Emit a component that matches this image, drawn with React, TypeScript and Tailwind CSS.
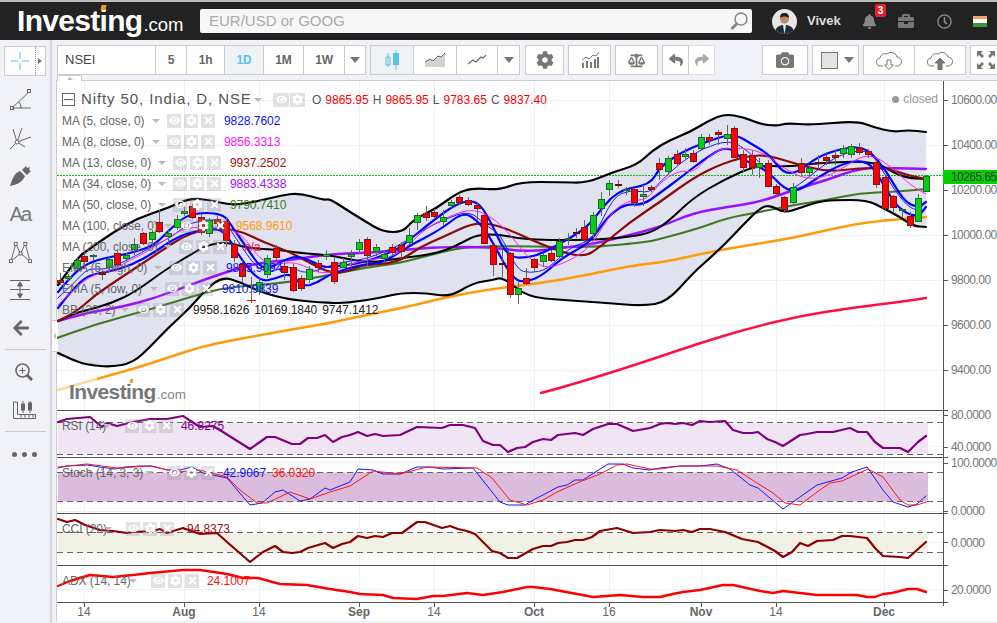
import React from "react";
import { FaCog, FaCamera, FaBell, FaBriefcase, FaRegClock, FaReply, FaShare, FaArrowLeft, FaEye, FaTimes, FaBalanceScale } from "react-icons/fa";

type C = [number, number, number, number, number, number];
const candles: C[] = [
  [60,280,282,0,273,285],[68,276,278,1,274,282],[77,260,268,1,258,270],[84,256,261,0,253,268],[93,255,256,1,254,260],[102,272,274,2,270,280],[109,259,267,1,257,272],[117,253,264,0,251,267],[126,255,258,1,253,262],[134,244,249,1,238,255],[143,233,243,0,232,245],[152,232,239,1,230,245],[159,222,231,0,210,233],[168,233,236,1,229,243],[177,219,227,1,215,230],[184,211,213,1,205,216],[192,206,217,0,204,219],[201,217,232,0,214,235],[209,220,233,1,218,237],[217,219,223,0,215,228],[226,221,240,0,218,247],[234,244,257,0,240,262],[242,264,276,0,260,282],[259,282,291,1,278,295],[267,258,274,1,255,278],[276,248,257,0,245,262],[284,266,272,0,262,280],[293,267,290,0,264,292],[301,278,288,0,275,291],[309,269,279,1,266,283],[318,263,267,0,260,272],[326,254,256,1,250,260],[334,262,281,0,258,284],[343,262,267,1,258,268],[351,254,256,1,250,267],[359,242,249,1,239,254],[367,239,255,0,237,266],[376,247,251,1,244,256],[384,254,258,1,250,263],[392,247,252,0,244,256],[401,245,251,0,242,258],[409,235,242,1,228,245],[417,215,222,1,213,230],[426,213,217,0,206,221],[434,212,216,0,209,219],[443,217,221,1,210,226],[451,202,205,1,200,208],[459,197,202,0,195,205],[468,200,204,0,197,206],[477,205,208,0,203,220],[484,215,243,0,214,244],[493,245,264,0,244,276],[502,263,264,2,247,277],[510,253,294,0,252,298],[518,288,294,1,281,304],[526,278,283,0,268,285],[534,259,267,0,258,272],[543,255,261,1,253,267],[551,253,260,0,250,262],[559,241,256,1,238,257],[568,238,239,1,233,245],[576,232,233,2,228,238],[584,227,239,0,220,244],[593,215,233,1,212,238],[601,199,208,1,192,216],[609,183,189,1,180,196],[618,184,185,2,180,188],[626,189,190,1,187,195],[634,189,202,0,188,207],[643,194,196,1,185,206],[651,187,189,0,185,192],[659,163,169,0,158,180],[668,158,171,1,156,175],[677,154,163,0,150,165],[685,154,156,1,148,160],[693,153,161,0,150,163],[701,137,148,1,134,150],[709,137,140,0,134,145],[718,132,134,0,130,145],[727,134,138,1,125,145],[734,128,157,0,126,158],[743,154,167,0,150,172],[752,155,167,0,150,175],[759,163,167,1,158,178],[768,163,186,0,160,187],[776,186,193,0,184,197],[784,197,209,0,196,213],[793,187,202,1,183,204],[801,163,172,0,158,175],[809,168,172,1,165,176],[818,162,163,2,155,168],[826,157,160,0,152,165],[835,155,157,0,150,165],[843,148,153,1,145,158],[851,146,154,1,144,158],[859,148,152,0,143,155],[868,151,154,0,149,158],[876,162,184,0,160,188],[885,177,208,0,176,210],[893,196,207,0,195,213],[902,209,210,1,208,217],[910,216,225,0,212,228],[918,198,221,1,194,222],[926,176,191,1,175,192],
];

const upper = "58,285 77,258 88,250 112,233 138,218 168,208 190,198 210,200 230,205 250,203 283,195 300,193 323,200 330,199 347,210 363,220 383,232 403,232 413,220 437,208 457,193 473,188 500,190 520,182 560,182 587,183 613,172 637,165 653,150 670,140 690,132 710,120 725,114 743,117 760,124 777,126 787,123 810,125 857,121 873,127 893,132 908,130 926,132";
const lower = "58,353 77,362 90,365 110,367 133,363 152,345 168,328 190,308 207,288 223,277 240,282 260,292 290,300 330,303 347,303 380,298 400,293 427,293 450,297 473,283 493,280 503,277 527,297 563,300 607,303 643,306 667,302 693,273 710,258 727,242 743,225 760,208 770,205 784,213 800,208 817,202 833,200 867,200 883,208 900,217 913,226 926,227";
const mid = "58,321 75,313 88,310 112,303 135,292 165,270 190,255 207,245 227,242 247,248 280,250 300,253 327,255 343,258 370,263 402,258 427,255 447,250 463,242 477,235 497,234 527,240 590,240 630,237 653,232 670,220 693,198 723,180 757,165 787,167 817,163 873,161 893,172 907,178 926,179";
const ma200 = "541,393 560,388 600,376 650,360 700,343 750,328 800,316 850,308 900,302 926,298";
const orange = "58,390 100,378 133,369 167,358 200,347 233,340 267,334 300,328 330,323 347,319 407,307 447,297 497,288 543,283 597,273 630,266 670,261 700,254 737,247 793,238 827,230 867,222 926,217";
const green = "57,338 88,327 122,317 155,308 190,297 223,288 257,285 290,282 330,275 363,268 400,263 430,255 463,247 513,246 557,247 597,247 647,242 660,239 700,228 727,218 760,212 793,205 827,200 860,193 893,192 926,189";
const purple = "58,321 85,313 122,307 155,298 190,285 223,273 257,263 290,260 330,254 363,253 403,250 440,247 490,247 527,252 570,247 593,244 630,235 660,227 693,213 727,207 760,202 793,190 827,180 860,168 893,168 926,169";
const ma13 = "58,321 75,313 95,295 122,277 155,255 190,232 223,228 243,232 263,242 290,252 310,263 330,273 347,272 363,265 397,263 420,247 443,237 473,223 493,224 517,233 547,247 583,258 600,247 630,222 660,202 693,178 723,163 760,153 793,163 827,172 860,168 887,168 907,175 926,179";
const high = "58,292 72,275 88,263 105,258 132,253 155,245 172,227 190,213 223,213 233,228 247,248 260,267 270,268 290,257 303,257 323,267 330,267 363,263 397,250 413,237 430,223 457,203 477,200 490,220 507,257 527,258 543,253 563,242 583,230 593,220 617,190 650,185 660,167 680,153 703,143 733,133 750,143 770,155 783,173 797,173 817,157 843,148 867,147 887,172 903,200 917,208 926,202";
const low = "58,308 72,290 88,275 108,272 132,265 155,252 172,240 190,232 217,228 227,235 240,258 260,282 277,278 290,273 303,287 317,283 330,274 363,264 383,263 407,247 440,230 463,212 477,220 490,237 513,280 527,282 543,275 563,257 590,243 607,217 625,204 643,205 660,193 680,178 703,160 727,145 743,160 767,170 783,188 797,192 817,178 843,163 867,160 880,178 897,208 917,218 926,207";
const ma5 = "58,298 75,282 88,268 105,270 128,260 155,245 172,237 190,222 223,218 240,245 262,275 290,265 305,275 340,262 363,260 397,247 423,230 443,220 470,210 487,227 500,233 517,270 530,273 547,270 570,247 593,240 613,197 630,190 650,193 660,182 680,163 703,148 730,140 747,150 770,173 787,192 803,182 827,162 847,152 870,150 887,178 903,202 917,212 926,202";
const ma8 = "58,305 72,292 88,277 102,273 122,265 155,247 175,233 190,227 223,227 243,235 260,260 277,265 290,262 303,265 323,275 343,267 363,260 397,257 423,230 447,217 473,208 497,220 517,243 527,257 547,270 577,257 593,243 613,210 630,200 647,200 660,182 680,170 693,173 710,155 725,147 760,150 783,168 807,180 833,175 857,158 873,155 893,168 910,185 926,194";

const rsi = "58,422 67,419 90,417 102,427 107,423 117,426 133,422 150,419 167,419 183,416 200,427 213,426 223,432 250,449 267,437 275,437 292,444 300,444 308,438 317,438 325,435 333,442 342,437 350,435 358,432 367,436 375,434 383,436 400,435 417,427 442,428 450,425 463,425 475,428 483,441 493,445 500,445 508,452 517,448 525,447 533,442 543,439 551,440 558,435 575,433 583,435 593,429 608,424 617,424 633,431 650,428 660,424 667,423 675,424 683,423 692,425 700,421 710,422 725,421 733,430 743,433 752,433 758,432 767,439 775,442 783,446 800,435 807,434 817,432 833,432 850,428 858,432 867,432 875,442 883,448 900,448 908,452 918,442 926,436";
const stB = "58,468 67,466 87,465 100,467 115,469 125,467 140,466 152,466 167,470 180,470 192,467 203,473 227,478 250,505 262,503 275,492 283,490 300,501 310,499 325,488 330,490 350,482 358,469 373,470 383,474 400,474 417,467 430,467 443,469 473,468 500,502 508,505 525,505 535,499 543,495 558,487 567,485 575,480 583,480 608,464 623,464 633,468 650,470 660,468 680,466 700,466 717,464 730,469 750,485 758,488 783,509 800,497 817,485 842,478 852,472 867,467 883,490 893,502 908,507 917,504 926,496";
const stR = "58,467 87,464 117,468 150,466 177,472 200,470 227,477 240,490 257,503 267,503 290,492 310,499 330,492 350,486 373,471 400,474 427,467 477,468 492,478 510,500 527,505 543,500 557,492 577,483 600,474 617,465 627,464 650,469 660,469 680,466 717,466 737,470 757,483 773,493 785,503 800,505 817,492 830,483 842,481 868,469 883,477 900,500 908,505 917,505 926,502";
const cci = "58,519 67,522 75,520 85,525 100,530 113,531 127,533 133,532 153,531 160,529 167,533 183,528 200,534 217,533 227,542 250,562 263,552 275,546 283,552 292,553 300,552 308,548 325,543 333,548 342,544 350,542 358,536 367,538 375,536 383,537 392,533 402,533 417,522 425,522 442,528 450,526 458,529 467,531 475,534 492,551 500,553 508,558 517,558 533,549 543,546 551,546 558,543 567,542 575,540 583,540 592,537 600,531 617,528 633,533 650,532 660,530 675,531 683,530 692,532 700,529 710,529 725,532 742,539 758,542 775,551 783,557 792,552 800,543 808,546 817,541 833,540 842,536 850,536 867,538 875,548 883,556 900,557 908,558 926,542";
const adx = "58,586 70,581 90,575 113,577 133,575 150,573 183,570 200,570 227,574 243,578 258,578 280,584 307,585 330,589 350,592 360,594 383,595 393,598 417,599 433,596 443,596 467,593 483,595 503,592 527,587 533,587 550,589 577,594 593,597 620,595 643,597 660,597 673,594 683,592 700,590 723,585 733,585 760,591 773,593 783,591 817,595 857,595 867,597 875,597 883,594 892,593 908,589 917,589 926,592";

const vgrid = [84, 184, 259, 359, 434, 534, 609, 701, 776, 884];
const hgrid = [100, 145, 190, 235, 280, 325, 370, 414, 446, 462, 511, 542, 589];
const seps = [410, 457, 513, 565, 602];

function curve(p: string) {
  const pts = p.split(" ").map((s) => s.split(",").map(Number));
  let d = `${pts[0][0]} ${pts[0][1]}`;
  for (let i = 1; i < pts.length - 1; i++) {
    const mx = (pts[i][0] + pts[i + 1][0]) / 2;
    const my = (pts[i][1] + pts[i + 1][1]) / 2;
    d += ` Q${pts[i][0]} ${pts[i][1]} ${mx} ${my}`;
  }
  const e = pts[pts.length - 1];
  return `${d} L${e[0]} ${e[1]}`;
}
const band = `M${curve(upper)} L${curve(lower.split(" ").reverse().join(" "))}Z`;

const Line = ({ p, c, w }: { p: string; c: string; w: number }) => (
  <polyline points={p} fill="none" stroke={c} strokeWidth={w} strokeLinejoin="round" strokeLinecap="round" />
);
const Curve = ({ p, c, w }: { p: string; c: string; w: number }) => (
  <path d={`M${curve(p)}`} fill="none" stroke={c} strokeWidth={w} strokeLinejoin="round" strokeLinecap="round" />
);

function Chart() {
  return (
    <svg width="940" height="540" viewBox="57 81 940 540" className="absolute left-0 top-0">
      {vgrid.map((x) => <line key={x} x1={x + 0.5} x2={x + 0.5} y1={81} y2={602} stroke="#eff0f3" />)}
      {hgrid.map((y) => <line key={y} x1={57} x2={943} y1={y + 0.5} y2={y + 0.5} stroke="#eff0f3" />)}
      <path d={band} fill="#e1e2ef" />
      <line x1={57} x2={943} y1={175.5} y2={175.5} stroke="#00c000" strokeDasharray="2 1" />
      <Curve p={orange} c="#ff9a0a" w={2.4} />
      <rect x={57} y={375} width={40} height={20} fill="#ffffff" opacity={0.6} />
      <Curve p={ma200} c="#ff1040" w={2.4} />
      <Curve p={green} c="#3f7a22" w={2.2} />
      <Curve p={purple} c="#9a10ff" w={2.4} />
      <Curve p={mid} c="#000000" w={2} />
      <Curve p={upper} c="#000000" w={2.2} />
      <Curve p={lower} c="#000000" w={2.2} />
      <Curve p={ma13} c="#8b0a0a" w={2.2} />
      <Curve p={high} c="#0000ff" w={2.2} />
      <Curve p={low} c="#0000ff" w={2.2} />
      <Curve p={ma5} c="#1a1aff" w={1} />
      <Curve p={ma8} c="#ff20ff" w={1} />
      <line x1={251.5} x2={251.5} y1={277} y2={303} stroke="#666" />
      <line x1={247} x2={256} y1={300.5} y2={300.5} stroke="#f00" />
      {candles.map(([x, t, b, c, h, l]) => (
        <g key={x}>
          <line x1={x + 0.5} x2={x + 0.5} y1={h} y2={l} stroke="#666" />
          <rect x={x - 2.5} y={t + 0.5} width={6} height={Math.max(b - t, 1)} fill={c === 0 ? "#ff0000" : c === 1 ? "#09cc16" : "#7a1010"} stroke={c === 0 ? "#7a1818" : c === 1 ? "#1d6a26" : "#5a1010"} />
        </g>
      ))}
      <rect x={58} y={422.5} width={870} height={32} fill="#f0e5f3" />
      <rect x={58} y={472.5} width={870} height={29} fill="#dcbcdd" />
      <rect x={58} y={532.5} width={870} height={20} fill="#f2f1e5" />
      {[422.5, 454.5, 472.5, 501.5, 532.5, 552.5].map((y) => (
        <line key={y} x1={57} x2={943} y1={y} y2={y} stroke="#666" strokeDasharray="6 4" />
      ))}
      <Line p={rsi} c="#800080" w={2.2} />
      <Line p={stB} c="#1515ff" w={1} />
      <Line p={stR} c="#ff1515" w={1} />
      <Line p={cci} c="#8b0000" w={2.2} />
      <Line p={adx} c="#ff0000" w={2.4} />
      {seps.map((y) => <line key={y} x1={57} x2={948} y1={y + 0.5} y2={y + 0.5} stroke="#555" />)}
      <line x1={943.5} x2={943.5} y1={81} y2={606} stroke="#555" />
      {[100, 145, 190, 235, 280, 325, 370, 415, 447, 463, 511, 542, 590].map((y) => (
        <line key={y} x1={943} x2={948} y1={y + 0.5} y2={y + 0.5} stroke="#555" />
      ))}
      {vgrid.map((x) => <line key={x} x1={x + 0.5} x2={x + 0.5} y1={602} y2={607} stroke="#555" />)}
    </svg>
  );
}

const Btn = ({ w, children, active, last }: { w: string; children: React.ReactNode; active?: boolean; last?: boolean }) => (
  <div className={`${w} h-full flex items-center justify-center ${active ? "bg-[#eff3f6]" : "bg-white"} ${last ? "" : "border-r border-[#ccc]"}`}>
    {children}
  </div>
);
const Group = ({ children, cls }: { children: React.ReactNode; cls: string }) => (
  <div className={`flex h-full border border-[#ccc] bg-white box-border shrink-0 ${cls}`}>{children}</div>
);
const Caret = () => (
  <svg width="10" height="6" viewBox="0 0 10 6"><path d="M0 0h10L5 6z" fill="#777" /></svg>
);
const T = ({ s, c }: { s: string; c?: string }) => (
  <span className={`text-[12px] font-bold tracking-[-0.2px] ${c ?? "text-[#666]"}`}>{s}</span>
);

function Tools() {
  return (
    <div className="h-[30px] flex w-[941px] shrink-0 relative overflow-hidden">
      <Group cls="w-[309px] ml-[1px]">
        <Btn w="w-[98px]"><span className="text-[13px] text-[#444] w-full pl-[7px]">NSEI</span></Btn>
        <Btn w="w-[31px]"><T s="5" /></Btn>
        <Btn w="w-[38px]"><T s="1h" /></Btn>
        <Btn w="w-[39px]" active><T s="1D" c="text-[#5cc0e8]" /></Btn>
        <Btn w="w-[40px]"><T s="1M" /></Btn>
        <Btn w="w-[41px]"><T s="1W" /></Btn>
        <Btn w="w-[20px]" last><Caret /></Btn>
      </Group>
      <Group cls="w-[150px] ml-[4px]">
        <Btn w="w-[43px]" active>
          <svg width="14" height="20" viewBox="0 0 14 20" fill="none" stroke="#5cc0e8"><path d="M3 3v14M1 7h4v8H1zM11 0v20" /><rect x="8.5" y="3.5" width="5" height="11" fill="#5cc0e8" /></svg>
        </Btn>
        <Btn w="w-[43px]">
          <svg width="20" height="14" viewBox="0 0 20 14"><path d="M0 14V9l5-3 3 2 5-5 3 1 4-4v14z" fill="#d2d2d2" /><path d="M0 9l5-3 3 2 5-5 3 1 4-4" fill="none" stroke="#666" /></svg>
        </Btn>
        <Btn w="w-[41px]">
          <svg width="18" height="10" viewBox="0 0 18 10"><path d="M0 9l5-4 3 2 5-5 2 1 3-3" fill="none" stroke="#666" strokeWidth="1.2" /></svg>
        </Btn>
        <Btn w="w-[21px]" last><Caret /></Btn>
      </Group>
      <Group cls="w-[39px] ml-[5px] items-center justify-center"><FaCog size={18} color="#777" /></Group>
      <Group cls="w-[43px] ml-[4px] items-center justify-center">
        <svg width="18" height="16" viewBox="0 0 18 16" fill="#777"><path d="M1 11h2v5H1zM5 9h2v7H5zM9 10h2v6H9zM13 7h2v9h-2zM16 5h2v11h-2z" /><path d="M1 8l4-3 3 2 4-4 3 1 3-4" fill="none" stroke="#777" /></svg>
      </Group>
      <Group cls="w-[43px] ml-[4px] items-center justify-center"><FaBalanceScale size={17} color="#777" /></Group>
      <div className="flex h-full ml-[4px] shrink-0">
        <div className="w-[27px] h-full border border-[#ccc] bg-white flex items-center justify-center"><FaReply size={14} color="#777" /></div>
        <div className="w-[26px] h-full border border-l-0 border-[#ddd] bg-white flex items-center justify-center"><FaShare size={14} color="#aaa" /></div>
      </div>
      <Group cls="w-[46px] ml-[47px] items-center justify-center"><FaCamera size={18} color="#777" /></Group>
      <Group cls="w-[47px] ml-[4px] items-center pl-[8px] gap-[6px]">
        <div className="w-[17px] h-[17px] bg-[#e4e4e4] border border-[#777]" />
        <Caret />
      </Group>
      <Group cls="w-[103px] ml-[4px]">
        <Btn w="w-[51px]">
          <svg width="26" height="20" viewBox="0 0 26 20" fill="none" stroke="#777"><path d="M7 16H5a4 4 0 0 1-1-8 5 5 0 0 1 7-4 6 6 0 0 1 10 3 4.5 4.5 0 0 1 0 9h-2" /><path d="M11 10h4v5h2.5L13 19.5 8.500 15H11z" fill="#fff" /></svg>
        </Btn>
        <Btn w="w-[51px]" last>
          <svg width="26" height="20" viewBox="0 0 26 20" fill="none" stroke="#777"><path d="M7 16H5a4 4 0 0 1-1-8 5 5 0 0 1 7-4 6 6 0 0 1 10 3 4.500 4.500 0 0 1 0 9h-2" /><path d="M11 20v-7H8l5-5 5 5h-3v7z" fill="#777" /></svg>
        </Btn>
      </Group>
      <Group cls="w-[34px] ml-[4px] items-center justify-start pl-[6px]">
        <svg width="18" height="18" viewBox="0 0 18 18" fill="#777"><path d="M0 0h6L4 2l3 3-2 2-3-3-2 2zM18 0v6l-2-2-3 3-2-2 3-3-2-2zM0 18v-6l2 2 3-3 2 2-3 3 2 2zM18 18h-6l2-2-3-3 2-2 3 3 2-2z" /></svg>
      </Group>
    </div>
  );
}

const Side = ({ children, cls }: { children: React.ReactNode; cls: string }) => (
  <div className={`flex justify-center items-center shrink-0 w-full ${cls}`}>{children}</div>
);

function Sidebar() {
  return (
    <div className="w-[52px] shrink-0 border-r-2 border-[#d2d4d8] flex flex-col items-center">
      <div className="mt-[6px] ml-[-1px] w-[42px] h-[30px] border border-[#ccc] bg-white flex">
        <div className="w-[31px] flex items-center justify-center border-r border-dotted border-[#999]">
          <svg width="18" height="18" viewBox="0 0 18 18" stroke="#5cc0e8"><path d="M9 0v7M9 11v7M0 9h7M11 9h7" /></svg>
        </div>
        <div className="flex-1 flex items-center justify-center">
          <svg width="4" height="6" viewBox="0 0 4 6"><path d="M0 0l4 3-4 3z" fill="#777" /></svg>
        </div>
      </div>
      <Side cls="h-[26px] mt-[11px] pr-[10px]">
        <svg width="21" height="22" viewBox="0 0 21 22" fill="none" stroke="#666"><path d="M2 19L19 3" /><rect x="0.500" y="17.500" width="3" height="3" fill="#fff" /><rect x="17.500" y="0.500" width="3" height="3" fill="#fff" /><path d="M2 19h19M9 13a8 8 0 0 1 2 6" /></svg>
      </Side>
      <Side cls="h-[26px] mt-[12px] pr-[10px]">
        <svg width="23" height="23" viewBox="0 0 23 23" fill="none" stroke="#666"><path d="M1 22L8 15M8 15L4 2M8 15L13 1M8 15L22 10M8 15l8 5" /><circle cx="8" cy="15" r="2" fill="#fff" /></svg>
      </Side>
      <Side cls="h-[26px] mt-[12px] pr-[10px]">
        <svg width="21" height="20" viewBox="0 0 21 20" fill="#666"><path d="M0 20c2-6 4-13 10-15l5 5C13 16 6 19 0 20z" /><path d="M12 4l4-4 1 2 3-1-1 3 2 1-4 4z" /></svg>
      </Side>
      <Side cls="h-[26px] mt-[12px] pr-[10px]"><span className="text-[20px] tracking-[-2px] text-[#777] leading-none">Aa</span></Side>
      <Side cls="h-[26px] mt-[12px] pr-[10px]">
        <svg width="23" height="23" viewBox="0 0 24 24" fill="#fff" stroke="#666"><path d="M2 21L7 3l5 10 5-10 5 18M2 21l10-8 10 8" fill="none" /><rect x="0.500" y="19.500" width="3" height="3" /><rect x="5.500" y="1.500" width="3" height="3" /><rect x="10.500" y="11.500" width="3" height="3" /><rect x="15.500" y="1.500" width="3" height="3" /><rect x="20.500" y="19.500" width="3" height="3" /></svg>
      </Side>
      <Side cls="h-[26px] mt-[12px] pr-[10px]">
        <svg width="20" height="20" viewBox="0 0 20 20" fill="none" stroke="#666"><path d="M0 .5h20M0 9.500h20M0 19.500h20M10 2v16" /><path d="M10 2l-2.500 4h5zM10 18l-2.500-4h5z" fill="#666" /></svg>
      </Side>
      <Side cls="h-[26px] mt-[12px] pr-[8px]"><FaArrowLeft size={18} color="#666" /></Side>
      <div className="w-[41px] h-[1px] bg-[#ccc] mt-[8px]" />
      <Side cls="h-[26px] mt-[9px] pr-[2px]">
        <svg width="18" height="18" viewBox="0 0 18 18" fill="none" stroke="#666"><circle cx="7.500" cy="7.500" r="6.500" strokeWidth="1.500" /><path d="M7.500 4.500v6M4.500 7.500h6" /><path d="M12 12l5 5" strokeWidth="3" /></svg>
      </Side>
      <Side cls="h-[26px] mt-[12px] pr-[2px]">
        <svg width="23" height="18" viewBox="0 0 23 18" fill="none" stroke="#666"><path d="M.5 1v16.500h22v-4H4.500V1zM8 13.500v3M12 13.500v3M16 13.500v3M20 13.500v3" /><path d="M10 0v12M17 0v12" /><rect x="8.500" y="3" width="3" height="6" fill="#666" /><rect x="15.500" y="2" width="3" height="7" fill="#666" /></svg>
      </Side>
      <div className="w-[41px] h-[1px] bg-[#ccc] mt-[8px]" />
      <div className="flex gap-[5px] mt-[20px] pr-[1px]">
        <div className="w-[5px] h-[5px] rounded-full bg-[#666]" />
        <div className="w-[5px] h-[5px] rounded-full bg-[#666]" />
        <div className="w-[5px] h-[5px] rounded-full bg-[#666]" />
      </div>
    </div>
  );
}

const Box = ({ children }: { children: React.ReactNode }) => (
  <div className="w-[14px] h-[14px] bg-[#8a8a8a]/25 flex items-center justify-center shrink-0">{children}</div>
);
const Boxes = () => (
  <div className="flex gap-[3px]">
    <Box><FaEye size={11} color="#fff" /></Box>
    <Box><FaCog size={11} color="#fff" /></Box>
    <Box><FaTimes size={11} color="#fff" /></Box>
  </div>
);
const Tri = () => (
  <svg width="8" height="4" viewBox="0 0 8 4" className="shrink-0"><path d="M0 0h8L4 4z" fill="#bbb" /></svg>
);
const Row = ({ name, nameW, boxes, children }: { name: string; nameW: string; boxes?: string; children?: React.ReactNode }) => (
  <div className="h-[21px] flex items-center text-[12px] leading-none tracking-[-0.05px] whitespace-nowrap">
    <span className={`text-[#666] shrink-0 ${nameW}`}>{name}</span>
    <Tri />
    <div className={`${boxes ?? "ml-[7px]"}`}><Boxes /></div>
    {children}
  </div>
);
const Val = ({ c, m, s }: { c: string; m: string; s: string }) => <span className={`${c} ${m}`}>{s}</span>;

const prices = [[100, "10600.00"], [145, "10400.00"], [190, "10200.00"], [235, "10000.00"], [280, "9800.00"], [325, "9600.00"], [370, "9400.00"], [415, "80.0000"], [447, "40.0000"], [463, "100.0000"], [511, "0.0000"], [543, "0.0000"], [590, "20.0000"]] as [number, string][];
const dates = [[84, "14", 0], [184, "Aug", 1], [259, "14", 0], [359, "Sep", 1], [434, "14", 0], [534, "Oct", 1], [609, "16", 0], [701, "Nov", 1], [776, "14", 0], [884, "Dec", 1]] as [number, string, number][];

function Overlay() {
  return (
    <>
      <div className="absolute left-[5px] top-[8px] w-[880px] flex flex-col">
        <div className="h-[21px] flex items-center whitespace-nowrap">
          <div className="w-[13px] h-[13px] border border-[#666] flex items-center justify-center"><div className="w-[9px] h-[1px] bg-[#666]" /></div>
          <span className="ml-[6px] text-[15px] tracking-[0.9px] text-[#555] w-[173px]">Nifty 50, India, D, NSE</span>
          <Tri />
          <div className="ml-[11px] flex gap-[1px]">
            <div className="w-[16px] h-[14px] bg-[#8a8a8a]/25 flex items-center justify-center"><FaEye size={11} color="#fff" /></div>
            <div className="w-[15px] h-[14px] bg-[#8a8a8a]/25 flex items-center justify-center"><FaCog size={11} color="#fff" /></div>
          </div>
          <div className="ml-[7px] flex gap-[4px] text-[12px] leading-none">
            <span className="text-[#555]">O</span><span className="text-[#f00]">9865.95</span>
            <span className="text-[#555]">H</span><span className="text-[#f00]">9865.95</span>
            <span className="text-[#555]">L</span><span className="text-[#f00]">9783.65</span>
            <span className="text-[#555]">C</span><span className="text-[#f00]">9837.40</span>
          </div>
        </div>
        <Row name="MA (5, close, 0)" nameW="w-[90px]"><Val c="text-[#1010ff]" m="ml-[9px]" s="9828.7602" /></Row>
        <Row name="MA (8, close, 0)" nameW="w-[90px]"><Val c="text-[#ff10ff]" m="ml-[9px]" s="9856.3313" /></Row>
        <Row name="MA (13, close, 0)" nameW="w-[96px]"><Val c="text-[#a01010]" m="ml-[9px]" s="9937.2502" /></Row>
        <Row name="MA (34, close, 0)" nameW="w-[96px]"><Val c="text-[#9a10ff]" m="ml-[9px]" s="9883.4338" /></Row>
        <Row name="MA (50, close, 0)" nameW="w-[96px]"><Val c="text-[#3f7a22]" m="ml-[9px]" s="9790.7410" /></Row>
        <Row name="MA (100, close, 0)" nameW="w-[102px]"><Val c="text-[#ff9a0a]" m="ml-[9px]" s="9568.9610" /></Row>
        <Row name="MA (200, close, 0)" nameW="w-[102px]"><Val c="text-[#ff1040]" m="ml-[17px]" s="n/a" /></Row>
        <Row name="EMA (5, high, 0)" nameW="w-[92px]"><Val c="text-[#1010ff]" m="ml-[9px]" s="9875.9094" /></Row>
        <Row name="EMA (5, low, 0)" nameW="w-[88px]"><Val c="text-[#1010ff]" m="ml-[9px]" s="9810.9839" /></Row>
        <Row name="BB (20, 2)" nameW="w-[59px]">
          <span className="ml-[9px] flex gap-[5px] text-[#222]"><span>9958.1626</span><span>10169.1840</span><span>9747.1412</span></span>
        </Row>
      </div>

      <div className="absolute left-[5px] top-[334px]">
        <Row name="RSI (14)" nameW="w-[41px]" boxes="ml-[14px]"><Val c="text-[#800080]" m="ml-[8px]" s="46.8275" /></Row>
      </div>
      <div className="absolute left-[5px] top-[381px]">
        <Row name="Stoch (14, 3, 3)" nameW="w-[83px]" boxes="ml-[14px]">
          <span className="ml-[8px] flex gap-[6px]"><span className="text-[#1010ff]">42.9067</span><span className="text-[#ff1010]">36.0320</span></span>
        </Row>
      </div>
      <div className="absolute left-[5px] top-[437px]">
        <Row name="CCI (20)" nameW="w-[42px]" boxes="ml-[14px]"><Val c="text-[#a01010]" m="ml-[9px]" s="-94.8373" /></Row>
      </div>
      <div className="absolute left-[5px] top-[489px]">
        <Row name="ADX (14, 14)" nameW="w-[67px]" boxes="ml-[14px]"><Val c="text-[#ff1010]" m="ml-[8px]" s="24.1007" /></Row>
      </div>

      <div className="absolute right-[59px] top-[12px] flex items-center gap-[4px] text-[12px] text-[#999] leading-none">
        <div className="w-[7px] h-[7px] rounded-full bg-[#999]" />closed
      </div>

      {prices.map(([y, s]) => (
        <span key={y + s} className="absolute left-[894px] text-[12px] leading-[14px] tracking-[-0.55px] text-[#777]" style={{ top: y - 88 }}>{s}</span>
      ))}
      <div className="absolute left-[886px] top-[89px] w-[54px] h-[14px] bg-[#00d000] text-[12px] leading-[14px] tracking-[-0.55px] text-[#333] pl-[8px]">10265.65</div>

      {dates.map(([x, s, b]) => (
        <span key={x} className={`absolute top-[524px] w-[40px] text-center text-[12px] leading-[14px] text-[#666] ${b ? "font-bold" : ""}`} style={{ left: x - 57 - 20 }}>{s}</span>
      ))}

      <div className="absolute left-[12px] top-[300px] flex items-baseline text-[#777] leading-none">
        <span className="text-[21px] font-bold tracking-[-0.6px] relative">Investing<span className="absolute left-[61px] top-[-2px] w-[3px] h-[4px] bg-[#f7941d] skew-x-[-15deg]" /></span>
        <span className="text-[13.500px] ml-[1px] text-[#888]">.com</span>
      </div>
    </>
  );
}

export default function App() {
  return (
    <div className="w-[997px] h-[623px] overflow-hidden bg-[#f0f2f7] flex flex-col font-['Liberation_Sans',sans-serif]">
      <div className="h-[2px] bg-[#bbb] shrink-0" />
      <div className="h-[38px] bg-[#222] shrink-0 flex items-center">
        <div className="ml-[17px] w-[183px] flex items-baseline text-white leading-none relative">
          <span className="text-[30px] font-bold tracking-[-0.7px]">Investing</span>
          <span className="text-[18.500px] ml-[1px]">.com</span>
          <span className="absolute left-[84px] top-[-1px] w-[5px] h-[5px] bg-[#f7941d] skew-x-[-15deg]" />
        </div>
        <div className="w-[552px] h-[24px] bg-[#f7f7f7] rounded-[2px] flex items-center pl-[9px] pr-[4px] justify-between">
          <span className="text-[15px] text-[#aaa]">EUR/USD or GOOG</span>
          <svg width="18" height="18" viewBox="0 0 18 18" fill="none" stroke="#888"><circle cx="11" cy="7" r="6" strokeWidth="1.500" /><path d="M7 11.500L1.500 17" strokeWidth="3" /></svg>
        </div>
        <div className="ml-[20px] w-[25px] h-[25px] rounded-full overflow-hidden bg-[#e8e6e2] shrink-0">
          <svg width="25" height="25" viewBox="0 0 25 25"><path d="M3 25c0-7 4-9 9.500-9S22 18 22 25z" fill="#1f2a3a" /><path d="M11 16h3l-1.500 9z" fill="#cfe" /><circle cx="12.500" cy="10" r="4.500" fill="#b98a6a" /><path d="M8 9c0-4 2-5 4.500-5S17 5 17 9c-2-2-7-2-9 0z" fill="#1a1a1a" /></svg>
        </div>
        <span className="ml-[10px] w-[44px] text-[13px] font-bold text-[#ddd]">Vivek</span>
        <div className="ml-[10px] w-[17px] relative flex justify-center">
          <FaBell size={15} color="#888" />
          <span className="absolute left-[14px] top-[-10px] w-[11px] h-[13px] rounded-[2px] bg-[#e8202a] text-white text-[10px] font-bold leading-[13px] text-center">3</span>
        </div>
        <div className="ml-[19px] w-[17px] flex justify-center"><FaBriefcase size={16} color="#777" /></div>
        <div className="ml-[22px] w-[16px] flex justify-center"><FaRegClock size={15} color="#888" /></div>
        <div className="ml-[21px] w-[14px] h-[11px] flex flex-col">
          <div className="flex-1 bg-[#f4a460]" />
          <div className="flex-1 bg-white" />
          <div className="flex-1 bg-[#3a9a3a]" />
        </div>
      </div>
      <div className="flex-1 flex min-h-0">
        <Sidebar />
        <div className="flex flex-col pl-[4px] pt-[5px] relative">
          <Tools />
          <div className="mt-[5px] w-[941px] h-[541px] border-l border-t border-[#ccc] bg-white relative shrink-0">
            <Chart />
            <Overlay />
            <div className="absolute left-0 top-[-6px] w-[25px] h-[6px] bg-white border border-b-0 border-[#ccc] flex items-center justify-center">
              <svg width="6" height="3" viewBox="0 0 6 3"><path d="M3 0l3 3H0z" fill="#bbb" /></svg>
            </div>
            <div className="absolute left-[-6px] top-[239px] w-[6px] h-[32px] bg-white border border-r-0 border-[#ccc] flex items-center justify-center">
              <svg width="3" height="6" viewBox="0 0 3 6"><path d="M3 0v6L0 3z" fill="#bbb" /></svg>
            </div>
          </div>
        </div>
      </div>
    </div>
  );
}
